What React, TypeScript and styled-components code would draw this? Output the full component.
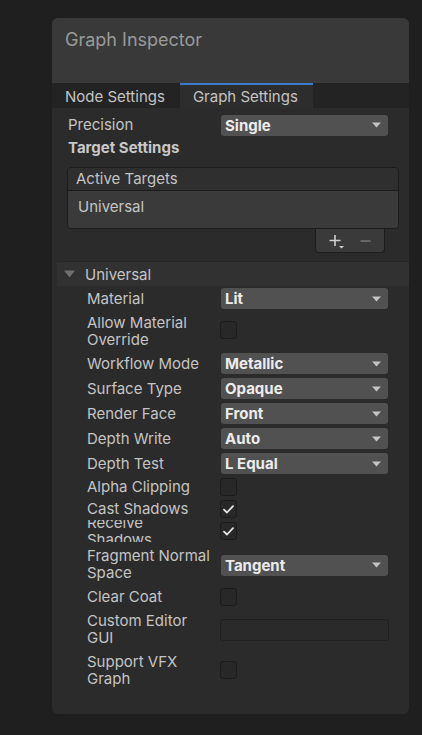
import React from "react";
import styled, { createGlobalStyle } from "styled-components";

const GlobalStyle = createGlobalStyle`
  html, body { margin: 0; padding: 0; background: #1f1f1f; }
  body { font-family: Inter, "Noto Sans", sans-serif; -webkit-font-smoothing: antialiased; }
  * { box-sizing: border-box; }
`;

const Page = styled.div`
  min-height: 735px;
  padding: 18px 0 0 52px;
`;

const Panel = styled.div`
  width: 357px;
  height: 696px;
  background: #2b2b2b;
  border-radius: 6px;
  overflow: hidden;
  display: flex;
  flex-direction: column;
`;

const Header = styled.div`
  height: 65px;
  background: #393939;
  padding: 10px 13px 0;
`;

const Title = styled.div`
  font-size: 18px;
  line-height: 24px;
  color: #9a9a9a;
`;

const TabBar = styled.div`
  height: 25px;
  background: #232323;
  display: flex;
`;

const Tab = styled.div<{ $active?: boolean }>`
  height: 25px;
  padding: 0 15px 0 13px;
  font-size: 15px;
  line-height: 23px;
  color: #c4c4c4;
  background: ${(p) => (p.$active ? "#2d2d2d" : "transparent")};
  border-top: 2px solid ${(p) => (p.$active ? "#3d7ccc" : "transparent")};
  white-space: nowrap;
`;

const Section = styled.div`
  padding: 7px 10px 0 16px;
  display: flex;
  flex-direction: column;
`;

const TopRow = styled.div`
  display: flex;
  align-items: center;
  height: 20px;
`;

const TopLabel = styled.div`
  width: 153px;
  font-size: 15px;
  color: #c4c4c4;
  line-height: 18px;
`;

const Heading = styled.div`
  height: 22px;
  margin-top: 2px;
  font-size: 15px;
  font-weight: 700;
  color: #c8c8c8;
  line-height: 22px;
`;

const List = styled.div`
  margin: 8px 0 0 -1px;
  border: 1px solid #1c1c1c;
  border-radius: 4px;
  overflow: hidden;
`;

const ListHeader = styled.div`
  height: 23px;
  background: #2f2f2f;
  border-bottom: 1px solid #1c1c1c;
  padding-left: 8px;
  font-size: 15px;
  line-height: 22px;
  color: #c4c4c4;
`;

const ListBody = styled.div`
  height: 37px;
  background: #3a3a3a;
  padding: 7px 0 0 10px;
  font-size: 15px;
  line-height: 18px;
  color: #c4c4c4;
`;

const ListFooter = styled.div`
  align-self: flex-end;
  margin-right: 14px;
  width: 70px;
  height: 24px;
  background: #3a3a3a;
  border: 1px solid #1c1c1c;
  border-top: none;
  border-radius: 0 0 4px 4px;
  display: flex;
  align-items: center;
  justify-content: center;
  gap: 15px;
  padding-top: 1px;
`;

const Foldout = styled.div`
  margin: 8px 0 0 5px;
  display: flex;
  flex-direction: column;
`;

const FoldoutHeader = styled.div`
  height: 25px;
  background: #313131;
  border-top: 1px solid #262626;
  display: flex;
  align-items: center;
  padding-left: 7px;
  gap: 10px;
  font-size: 15px;
  color: #c4c4c4;
`;

const FoldoutBody = styled.div`
  padding-left: 30px;
  display: flex;
  flex-direction: column;
`;

const Row = styled.div<{ $h: number }>`
  height: ${(p) => p.$h}px;
  display: flex;
  align-items: center;
  overflow: hidden;
`;

const Label = styled.div`
  width: 123.5px;
  margin-right: 10.5px;
  flex-shrink: 0;
  font-size: 15px;
  line-height: 17.5px;
  color: #c4c4c4;
`;

const Control = styled.div<{ $dy?: number }>`
  margin-top: ${(p) => (p.$dy ?? 0) * 2}px;
  display: flex;
  align-items: center;
`;

const Dropdown = styled.div<{ $w?: number }>`
  width: ${(p) => p.$w ?? 167}px;
  height: 21px;
  background: #515151;
  border-radius: 3px;
  display: flex;
  align-items: center;
  justify-content: space-between;
  padding: 0 7px 0 4px;
  font-size: 15px;
  font-weight: 700;
  color: #ececec;
`;

const Checkbox = styled.div`
  width: 17px;
  height: 18px;
  margin-left: -1px;
  background: #282828;
  border: 1px solid #1b1b1b;
  border-radius: 3px;
  display: flex;
  align-items: center;
  justify-content: center;
`;

const TextField = styled.div`
  width: 169px;
  height: 22px;
  margin-left: -1px;
  background: #2a2a2a;
  border: 1px solid #202020;
  border-radius: 3px;
`;

const Arrow = () => (
  <svg width="9" height="6" viewBox="0 0 9 6">
    <path d="M0 0.5 L9 0.5 L4.5 5.5 Z" fill="#c4c4c4" />
  </svg>
);

const Check = () => (
  <svg width="11" height="9" viewBox="0 0 11 9">
    <path d="M1 4.6 L4 7.5 L10 1.2" stroke="#e6e6e6" strokeWidth="1.8" fill="none" strokeLinecap="round" strokeLinejoin="round" />
  </svg>
);

const FoldTriangle = () => (
  <svg width="11" height="8" viewBox="0 0 11 8">
    <path d="M0 0.5 L11 0.5 L5.5 7.5 Z" fill="#6f6f6f" />
  </svg>
);

const PlusIcon = () => (
  <svg width="16" height="15" viewBox="0 0 16 15">
    <path d="M6 1 V12 M0.5 6.5 H11.5" stroke="#d0d0d0" strokeWidth="1.6" />
    <path d="M10 12 H15 L12.5 14.5 Z" fill="#d0d0d0" />
  </svg>
);

const MinusIcon = () => (
  <svg width="11" height="15" viewBox="0 0 11 15">
    <path d="M0.5 7 H10.5" stroke="#777777" strokeWidth="1.6" />
  </svg>
);

type Item =
  | { kind: "dropdown"; label: string; value: string; h: number; dy?: number }
  | { kind: "check"; label: string; checked?: boolean; h: number; dy?: number }
  | { kind: "text"; label: string; h: number; dy?: number };

const items: Item[] = [
  { kind: "dropdown", label: "Material", value: "Lit", h: 25 },
  { kind: "check", label: "Allow Material Override", h: 40, dy: -1 },
  { kind: "dropdown", label: "Workflow Mode", value: "Metallic", h: 25 },
  { kind: "dropdown", label: "Surface Type", value: "Opaque", h: 25 },
  { kind: "dropdown", label: "Render Face", value: "Front", h: 25 },
  { kind: "dropdown", label: "Depth Write", value: "Auto", h: 25 },
  { kind: "dropdown", label: "Depth Test", value: "L Equal", h: 25 },
  { kind: "check", label: "Alpha Clipping", h: 22 },
  { kind: "check", label: "Cast Shadows", checked: true, h: 22 },
  { kind: "check", label: "Receive Shadows", checked: true, h: 22 },
  { kind: "dropdown", label: "Fragment Normal Space", value: "Tangent", h: 44, dy: 1 },
  { kind: "check", label: "Clear Coat", h: 22 },
  { kind: "text", label: "Custom Editor GUI", h: 42, dy: 1 },
  { kind: "check", label: "Support VFX Graph", h: 40 },
];

export default function App() {
  return (
    <>
      <GlobalStyle />
      <Page>
        <Panel>
          <Header>
            <Title>Graph Inspector</Title>
          </Header>
          <TabBar>
            <Tab>Node Settings</Tab>
            <Tab $active>Graph Settings</Tab>
          </TabBar>
          <Section>
            <TopRow>
              <TopLabel>Precision</TopLabel>
              <Dropdown>
                <span>Single</span>
                <Arrow />
              </Dropdown>
            </TopRow>
            <Heading>Target Settings</Heading>
            <List>
              <ListHeader>Active Targets</ListHeader>
              <ListBody>Universal</ListBody>
            </List>
            <ListFooter>
              <PlusIcon />
              <MinusIcon />
            </ListFooter>
          </Section>
          <Foldout>
            <FoldoutHeader>
              <FoldTriangle />
              <span>Universal</span>
            </FoldoutHeader>
            <FoldoutBody>
              {items.map((it) => (
                <Row key={it.label} $h={it.h}>
                  <Label>{it.label}</Label>
                  <Control $dy={it.dy}>
                    {it.kind === "dropdown" && (
                      <Dropdown>
                        <span>{it.value}</span>
                        <Arrow />
                      </Dropdown>
                    )}
                    {it.kind === "check" && (
                      <Checkbox>{it.checked && <Check />}</Checkbox>
                    )}
                    {it.kind === "text" && <TextField />}
                  </Control>
                </Row>
              ))}
            </FoldoutBody>
          </Foldout>
        </Panel>
      </Page>
    </>
  );
}
